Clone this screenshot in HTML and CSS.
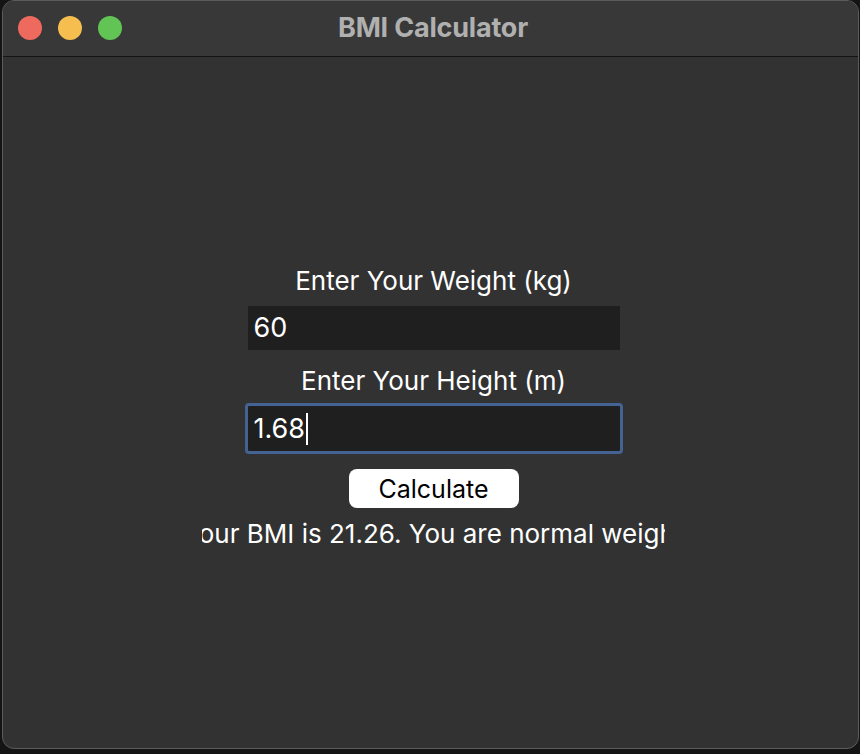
FILE: index.html
```html
<!DOCTYPE html>
<html lang="en">
<head>
<meta charset="utf-8">
<title>BMI Calculator</title>
<link rel="stylesheet" href="styles.css">
</head>
<body>
<div class="window">
  <header class="titlebar">
    <div class="lights">
      <span class="light red"></span>
      <span class="light yellow"></span>
      <span class="light green"></span>
    </div>
    <div class="title">BMI Calculator</div>
  </header>
  <main class="content">
    <div class="label first">Enter Your Weight (kg)</div>
    <div class="entry">60</div>
    <div class="label second">Enter Your Height (m)</div>
    <div class="entry focused">1.68<span class="caret"></span></div>
    <button class="btn">Calculate</button>
    <div class="result"><span class="result-text">Your BMI is 21.26. You are normal weight.</span></div>
  </main>
</div>
</body>
</html>
```
FILE: styles.css
```css
* { box-sizing: border-box; }
html, body {
  margin: 0;
  padding: 0;
  background: #141414;
  width: 860px;
  height: 754px;
  overflow: hidden;
}
body {
  font-family: Inter, "Liberation Sans", sans-serif;
  color: #ffffff;
}
.window {
  margin-left: 2px;
  width: 857px;
  height: 749px;
  background: #323232;
  border: 1px solid #5c5c5c;
  border-radius: 12px;
  overflow: hidden;
  display: flex;
  flex-direction: column;
}
.titlebar {
  position: relative;
  height: 56px;
  flex: none;
  background: #383838;
  border-bottom: 1px solid #151515;
  display: flex;
  align-items: center;
  justify-content: center;
}
.lights {
  position: absolute;
  left: 15px;
  top: 15px;
  display: flex;
  gap: 16px;
}
.light {
  width: 24px;
  height: 24px;
  border-radius: 50%;
  display: block;
}
.red { background: #ee6a5f; }
.yellow { background: #f5be4f; }
.green { background: #61c454; }
.title {
  font-size: 27px;
  font-weight: 700;
  color: #b0b0b0;
  margin-left: 5px;
  margin-top: -3px;
  letter-spacing: -0.2px;
}
.content {
  flex: 1;
  display: flex;
  flex-direction: column;
  align-items: center;
  padding-top: 209px;
  padding-left: 6px;
}
.label {
  font-size: 26px;
  line-height: 30px;
  height: 30px;
  white-space: nowrap;
}
.entry {
  width: 372px;
  height: 44px;
  margin-top: 10px;
  background: #1f1f1f;
  font-size: 27px;
  line-height: 44px;
  padding-left: 6px;
  display: flex;
  align-items: center;
}
.label.second { margin-top: 16px; }
.entry.focused {
  width: 378px;
  height: 51px;
  margin-top: 7px;
  border: 3px solid #456392;
  border-radius: 4px;
  padding-left: 6px;
}
.caret {
  display: inline-block;
  width: 2px;
  height: 32px;
  background: #ffffff;
  margin-left: 1px;
}
.btn {
  margin-top: 15px;
  width: 170px;
  height: 39px;
  background: #ffffff;
  border: none;
  border-radius: 8px;
  color: #000000;
  font-family: Inter, "Liberation Sans", sans-serif;
  font-size: 25px;
  padding: 0;
}
.result {
  margin-top: 10px;
  width: 463px;
  height: 32px;
  overflow: hidden;
  display: flex;
  justify-content: center;
  white-space: nowrap;
  font-size: 26px;
  line-height: 32px;
  padding-left: 7px;
}
.result-text { flex: none; }
```
